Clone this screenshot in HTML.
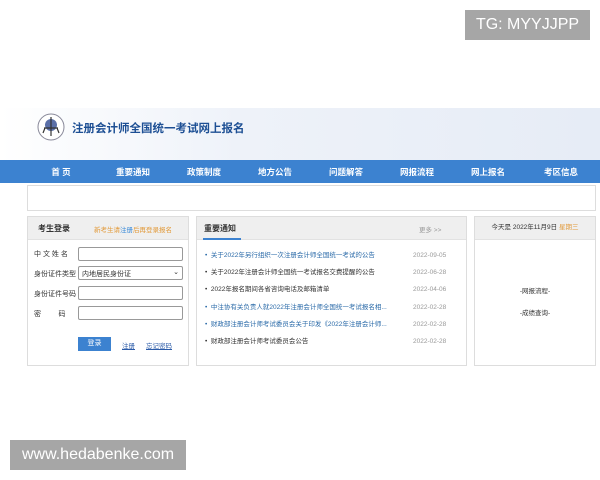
<!DOCTYPE html>
<html><head><meta charset="utf-8"><style>
*{margin:0;padding:0;box-sizing:border-box}
body{width:600px;height:480px;background:#fff;position:relative;overflow:hidden;font-family:"Liberation Sans","Noto Sans CJK SC",sans-serif;color:#333}
.a{position:absolute}
.wm{background:#a6a6a6;color:#fff;font-size:16px;display:flex;align-items:center;justify-content:center}
.hdr{left:0;top:108px;width:600px;height:52px;background:linear-gradient(90deg,#fff 0%,#eef2f9 40%,#e6ecf6 100%)}
.nav{left:0;top:160px;width:600px;height:23px;background:#3c82d0;color:#fff;font-size:8.5px;font-weight:bold}
.nav span{position:absolute;top:6px;transform:translateX(-50%)}
.box{border:1px solid #ddd;background:#fff}
.ph{position:absolute;left:0;top:0;right:0;height:23px;background:#efefef;border-bottom:1px solid #e2e2e2;font-size:8px}
.lab{position:absolute;left:6px;font-size:7px;color:#333}
.inp{position:absolute;left:50px;width:105px;height:14px;border:1px solid #999;border-radius:2px;background:#fff}
.li{position:absolute;left:8px;font-size:6.5px;line-height:10px;color:#333}
.li.b{color:#2a6aa8}
.dt{position:absolute;left:216px;font-size:6.5px;line-height:10px;color:#999}
</style></head><body>
<div class="a wm" style="left:465px;top:10px;width:125px;height:30px">TG: MYYJJPP</div>

<div class="a hdr"></div>
<svg class="a" style="left:36px;top:112px" width="30" height="30" viewBox="0 0 30 30">
<circle cx="15" cy="15" r="13" fill="#fff" stroke="#889" stroke-width="1"/>
<circle cx="15" cy="13" r="6" fill="#5a6fa8"/>
<path d="M15 5 L15 24 M8 16 L22 16 M9 16 L7 21 M21 16 L23 21" stroke="#333" stroke-width="1.2" fill="none"/>
</svg>
<div class="a" style="left:72px;top:120px;font-size:11.5px;font-weight:bold;color:#1d4f94">注册会计师全国统一考试网上报名</div>

<div class="a nav">
<span style="left:61px">首 页</span><span style="left:133px">重要通知</span><span style="left:204px">政策制度</span><span style="left:275px">地方公告</span><span style="left:346px">问题解答</span><span style="left:417px">网报流程</span><span style="left:488px">网上报名</span><span style="left:561px">考区信息</span>
</div>

<div class="a box" style="left:27px;top:185px;width:569px;height:26px"></div>

<div class="a box" style="left:27px;top:216px;width:162px;height:150px">
<div class="ph"><span class="a" style="left:10px;top:6px;color:#333;font-weight:bold">考生登录</span><span class="a" style="left:66px;top:7px;font-size:6.5px;color:#e29a3a">新考生请<span style="color:#3a8ad8">注册</span>后再登录报名</span></div>
<div class="lab" style="top:32px">中 文 姓 名</div><div class="inp" style="top:30px"></div>
<div class="lab" style="top:52px">身份证件类型</div><div class="inp" style="top:49px;font-size:7px;padding:2px 3px">内地居民身份证<span style="position:absolute;right:3px;top:1px">⌄</span></div>
<div class="lab" style="top:72px">身份证件号码</div><div class="inp" style="top:69px"></div>
<div class="lab" style="top:92px">密&nbsp;&nbsp;&nbsp;&nbsp;&nbsp;&nbsp;&nbsp;&nbsp;&nbsp;码</div><div class="inp" style="top:89px"></div>
<div class="a" style="left:50px;top:120px;width:33px;height:14px;background:#3c82d0;color:#fff;font-size:7px;text-align:center;line-height:14px">登录</div>
<div class="a" style="left:94px;top:123px;font-size:6.5px;color:#2a5aa8;text-decoration:underline">注册</div>
<div class="a" style="left:118px;top:123px;font-size:6.5px;color:#2a5aa8;text-decoration:underline">忘记密码</div>
</div>

<div class="a box" style="left:196px;top:216px;width:271px;height:150px">
<div class="ph"><span class="a" style="left:7px;top:6px;font-weight:bold">重要通知</span><div class="a" style="left:6px;top:21px;width:38px;height:2px;background:#3c82d0"></div><span class="a" style="left:222px;top:7px;font-size:6.5px;color:#999">更多 &gt;&gt;</span></div>
<div class="li b" style="top:34px">•&nbsp; 关于2022年另行组织一次注册会计师全国统一考试的公告</div><div class="dt" style="top:34px">2022-09-05</div>
<div class="li" style="top:51px">•&nbsp; 关于2022年注册会计师全国统一考试报名交费提醒的公告</div><div class="dt" style="top:51px">2022-06-28</div>
<div class="li" style="top:68px">•&nbsp; 2022年报名期间各省咨询电话及邮箱清单</div><div class="dt" style="top:68px">2022-04-06</div>
<div class="li b" style="top:86px">•&nbsp; 中注协有关负责人就2022年注册会计师全国统一考试报名相...</div><div class="dt" style="top:86px">2022-02-28</div>
<div class="li b" style="top:103px">•&nbsp; 财政部注册会计师考试委员会关于印发《2022年注册会计师...</div><div class="dt" style="top:103px">2022-02-28</div>
<div class="li" style="top:120px">•&nbsp; 财政部注册会计师考试委员会公告</div><div class="dt" style="top:120px">2022-02-28</div>
</div>

<div class="a box" style="left:474px;top:216px;width:122px;height:150px">
<div class="ph" style="font-size:6.5px;text-align:center;line-height:22px">今天是 2022年11月9日 <span style="color:#e29a3a">星期三</span></div>
<div class="a" style="left:0;right:0;top:68px;text-align:center;font-size:6.5px">-网报流程-</div>
<div class="a" style="left:0;right:0;top:90px;text-align:center;font-size:6.5px">-成绩查询-</div>
</div>

<div class="a wm" style="left:10px;top:440px;width:176px;height:30px">www.hedabenke.com</div>
</body></html>
